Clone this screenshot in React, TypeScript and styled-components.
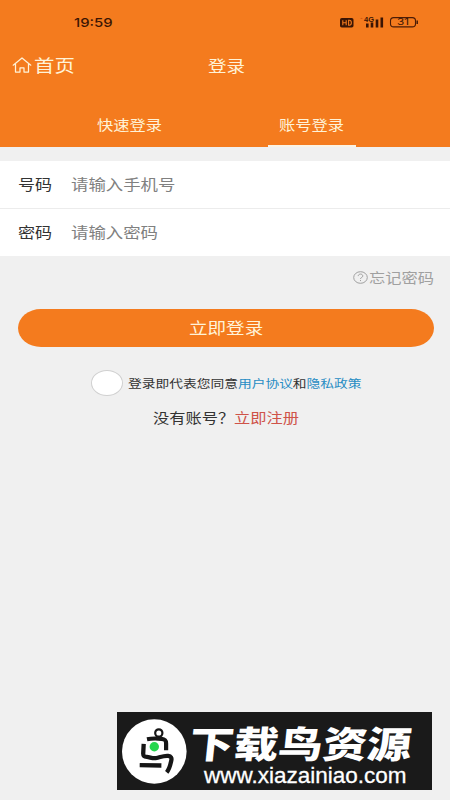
import React from "react";
import styled, { createGlobalStyle } from "styled-components";

const ORANGE = "#f47b1e";

const GlobalStyle = createGlobalStyle`
  *, *::before, *::after { box-sizing: border-box; }
  body { margin: 0; background: #f0f0f0; font-family: "Noto Sans CJK SC", "Liberation Sans", sans-serif; }
`;

const Page = styled.main`
  display: flex;
  flex-direction: column;
  width: 450px;
  height: 800px;
  overflow: hidden;
  background: #f0f0f0;
`;

const Header = styled.header`
  display: flex;
  flex-direction: column;
  height: 147px;
  background: ${ORANGE};
  color: #fff3d8;
`;

/* Widened lettering: the box reserves the width that the scaled glyphs fill. */
const Wide = styled.span<{ $width: number; $size: number; $color?: string; $scale?: number; $weight?: number }>`
  display: block;
  flex: none;
  width: ${(p) => p.$width}px;
  font-size: ${(p) => p.$size}px;
  font-weight: ${(p) => p.$weight ?? 400};
  line-height: 24px;
  white-space: nowrap;
  color: ${(p) => p.$color ?? "inherit"};
  transform: scaleX(${(p) => p.$scale ?? 1.16});
  transform-origin: left center;
`;

const StatusBar = styled.div`
  display: flex;
  align-items: center;
  justify-content: space-between;
  height: 44px;
  padding: 0 32px 0 74px;
  color: #3b1504;
`;

const Clock = styled(Wide)`
  padding-top: 1px;
  font-family: Inter, sans-serif;
`;

const NavBar = styled.nav`
  display: grid;
  grid-template-columns: 196px 1fr;
  align-items: center;
  height: 43px;
  padding: 0 0 2px 12px;
`;

const Home = styled.a`
  display: flex;
  align-items: center;
  gap: 2px;
`;

const Tabs = styled.div`
  display: grid;
  grid-template-columns: 88px 88px;
  column-gap: 94px;
  height: 60px;
  padding-left: 86px;
`;

const Tab = styled.div<{ $active?: boolean }>`
  display: flex;
  padding: 25px 0 0 11px;
  border-bottom: 2px solid ${(p) => (p.$active ? "#fbf3e4" : "transparent")};
`;

const Form = styled.section`
  margin-top: 14px;
  background: #fff;
`;

const Field = styled.div<{ $height: number }>`
  display: flex;
  align-items: center;
  gap: 18px;
  height: ${(p) => p.$height}px;
  padding: 0 0 2px 18px;
  & + & { border-top: 1px solid #ececec; }
`;

const Forgot = styled.a`
  display: flex;
  align-items: center;
  justify-content: flex-end;
  gap: 1px;
  height: 24px;
  margin-top: 9px;
  padding-right: 16px;
  color: #a0a0a0;
`;

const Submit = styled.button`
  display: flex;
  align-items: center;
  justify-content: flex-start;
  height: 38px;
  margin: 20px 16px 0 18px;
  padding: 0 0 2px 171px;
  border: 0;
  border-radius: 23px / 19px;
  background: ${ORANGE};
  color: #fff3d8;
  font-family: inherit;
  text-align: left;
`;

const Agreement = styled.label`
  display: flex;
  align-items: center;
  gap: 5px;
  height: 26px;
  margin: 23px 0 0 91px;
`;

const Checkbox = styled.span`
  width: 32px;
  height: 26px;
  border: 1px solid #d0d0d0;
  border-radius: 50%;
  background: #fff;
`;

const Link = styled.a`
  color: #288dc4;
`;

const Register = styled.div`
  display: flex;
  margin: 9px 0 0 153px;
`;

const Watermark = styled.footer`
  display: flex;
  width: 315px;
  height: 78px;
  margin: auto 0 10px 117px;
  padding: 7px 0 0 5px;
  gap: 4px;
  background: #1a1a1a;
  color: #fff;
`;

const Brand = styled.div`
  display: flex;
  flex-direction: column;
`;

const BrandName = styled.strong`
  width: 222px;
  height: 45px;
  font-size: 37px;
  font-weight: 900;
  line-height: 47px;
  white-space: nowrap;
  transform: translateX(-1px) scaleX(1.2) skewX(-5deg);
  transform-origin: left center;
`;

const BrandUrl = styled.span`
  margin-left: 13px;
  font-family: "Liberation Sans", sans-serif;
  font-size: 22.5px;
  line-height: 24px;
  white-space: nowrap;
  -webkit-text-stroke: 0.3px #fff;
`;

const StatusIcons = () => (
  <svg width="78" height="16" viewBox="340 14 78 16">
    <rect x="340" y="18" width="13.5" height="9.5" rx="1.8" fill="#3b1504" />
    <path d="M342.8 20.3v5M346.2 20.3v5M342.8 22.8h3.4M348.6 20.3v5h.8c2.6 0 2.6-5 0-5z" fill="none" stroke={ORANGE} strokeWidth="1.1" />
    <path d="M360 19l1.5-1.3L363 19z" fill="#d85b12" />
    <text x="364" y="21.8" fontFamily="Liberation Sans" fontSize="7.5" fontWeight="700" fill="#3b1504" textLength="10">4G</text>
    <path d="M367.3 27.5v-4M372 27.5v-5M377 27.5v-8M381.8 27.5v-10" stroke="#3b1504" strokeWidth="2.6" />
    <rect x="390.5" y="17.6" width="25" height="9.3" rx="3.2" fill="none" stroke="#4b1c07" strokeWidth="1.1" />
    <path d="M417.2 20.5v3.5" stroke="#3b1504" strokeWidth="1.4" />
    <text x="397" y="25.4" fontFamily="Inter" fontSize="8.5" fill="#3b1504" textLength="12" lengthAdjust="spacingAndGlyphs">31</text>
  </svg>
);

const HomeIcon = () => (
  <svg width="20" height="16" viewBox="0 0 20 16" fill="none" stroke="#fff3d8" strokeWidth="1.25" strokeLinejoin="round" strokeLinecap="round">
    <path d="M1.2 8.2L10 1l8.8 7.2M3.5 7.3V15H8v-4.1h4V15h4.5V7.3" />
  </svg>
);

const HelpIcon = () => (
  <svg width="15" height="13" viewBox="0 0 15 13" fill="none" stroke="#a0a0a0" strokeWidth="1">
    <ellipse cx="7.5" cy="6.5" rx="6.8" ry="5.8" />
    <path d="M5.2 5.1c0-2.7 4.6-2.7 4.6 0 0 1.3-2.3 1.3-2.3 2.8M7.5 9v1.1" />
  </svg>
);

const BirdLogo = () => (
  <svg width="65" height="65" viewBox="122 719 65 65" fill="none" stroke="#161616">
    <circle cx="154.3" cy="751.5" r="32.3" fill="#fff" stroke="none" />
    <ellipse cx="158.8" cy="733" rx="3.6" ry="3.7" strokeWidth="2.2" />
    <path d="M147 739.2c5-1 10-.8 14.5-.4 3.5.3 4.6 1.5 4.6 4.6v6.8" strokeWidth="4.2" />
    <path d="M143.7 743.8l-.5 9.5c-.1 2.5 1 3.4 3.6 3.6 3.5.3 6 2 9.7 1.1 4-1 8-2.6 11.7-2.1 2.8.4 3.7 2.1 3.1 4.6-1 4.2-1.5 8.2-4.6 11.8" strokeWidth="4.3" />
    <path d="M139.7 765.2l21.7.3" strokeWidth="4.3" />
    <circle cx="154.3" cy="746.7" r="4.7" fill="#25d64e" stroke="none" />
  </svg>
);

export default function App() {
  return (
    <>
      <GlobalStyle />
      <Page>
        <Header>
          <StatusBar>
            <Clock $width={40} $size={12} $scale={1.24} $weight={500}>19:59</Clock>
            <StatusIcons />
          </StatusBar>
          <NavBar>
            <Home>
              <HomeIcon />
              <Wide $width={42} $size={17.6}>首页</Wide>
            </Home>
            <Wide $width={38} $size={16}>登录</Wide>
          </NavBar>
          <Tabs>
            <Tab><Wide $width={65} $size={14}>快速登录</Wide></Tab>
            <Tab $active><Wide $width={65} $size={14}>账号登录</Wide></Tab>
          </Tabs>
        </Header>
        <Form>
          <Field $height={47}>
            <Wide $width={35} $size={14.7} $color="#333">号码</Wide>
            <Wide $width={105} $size={15} $color="#808080">请输入手机号</Wide>
          </Field>
          <Field $height={48}>
            <Wide $width={35} $size={14.7} $color="#333">密码</Wide>
            <Wide $width={88} $size={15} $color="#808080">请输入密码</Wide>
          </Field>
        </Form>
        <Forgot>
          <HelpIcon />
          <Wide $width={65} $size={14}>忘记密码</Wide>
        </Forgot>
        <Submit>
          <Wide $width={75} $size={16}>立即登录</Wide>
        </Submit>
        <Agreement>
          <Checkbox />
          <Wide $width={235} $size={11.85} $color="#333">
            登录即代表您同意<Link>用户协议</Link>和<Link>隐私政策</Link>
          </Wide>
        </Agreement>
        <Register>
          <Wide $width={81} $size={14} $color="#333">没有账号？</Wide>
          <Wide $width={65} $size={14} $color="#cf5349">立即注册</Wide>
        </Register>
        <Watermark>
          <BirdLogo />
          <Brand>
            <BrandName>下载鸟资源</BrandName>
            <BrandUrl>www.xiazainiao.com</BrandUrl>
          </Brand>
        </Watermark>
      </Page>
    </>
  );
}
